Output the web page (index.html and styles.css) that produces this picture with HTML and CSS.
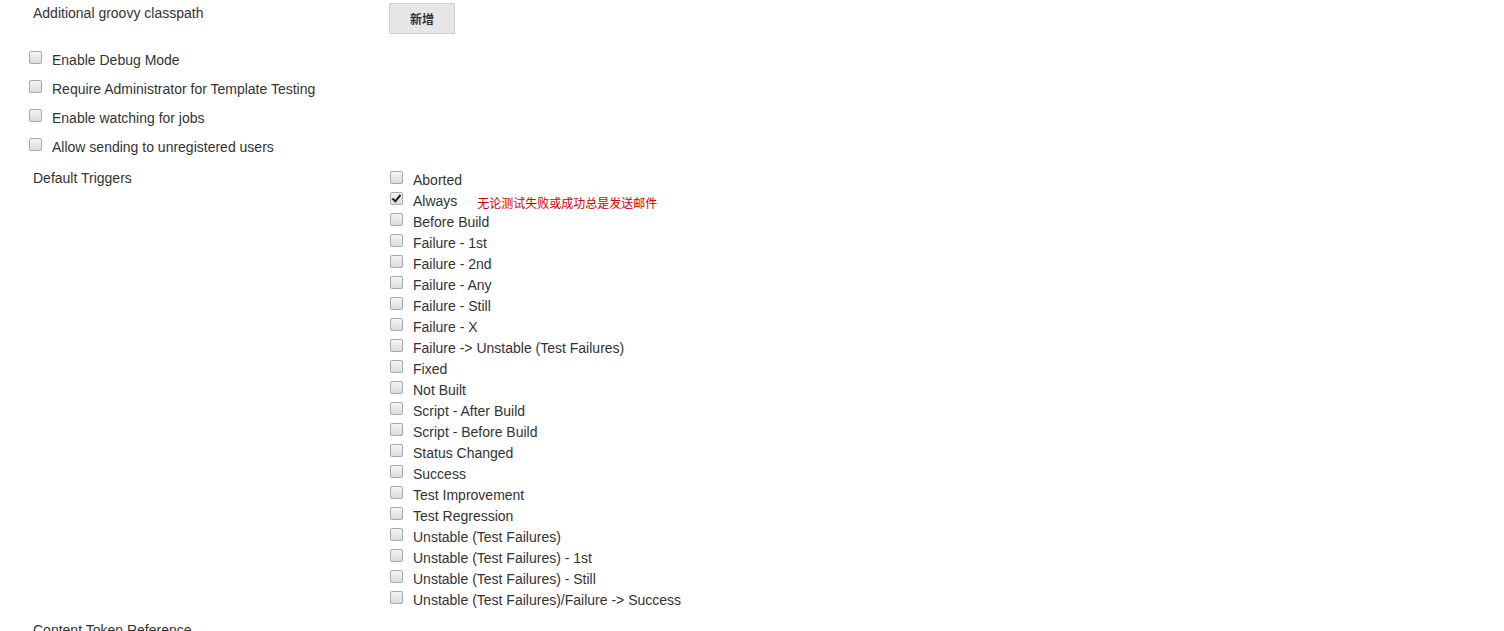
FILE: index.html
```html
<!DOCTYPE html>
<html>
<head>
<meta charset="utf-8">
<link rel="stylesheet" href="styles.css">
</head>
<body>
<div class="page">
  <div class="field field-top">
    <div class="label">Additional groovy classpath</div>
    <div class="value"><button class="btn">新增</button></div>
  </div>

  <div class="opts">
    <label class="opt"><span class="cb"></span><span>Enable Debug Mode</span></label>
    <label class="opt"><span class="cb"></span><span>Require Administrator for Template Testing</span></label>
    <label class="opt"><span class="cb"></span><span>Enable watching for jobs</span></label>
    <label class="opt"><span class="cb"></span><span>Allow sending to unregistered users</span></label>
  </div>

  <div class="field field-triggers">
    <div class="label">Default Triggers</div>
    <div class="value triggers">
      <label class="trig"><span class="cb"></span><span>Aborted</span></label>
      <label class="trig"><span class="cb checked"></span><span>Always</span><span class="note">无论测试失败或成功总是发送邮件</span></label>
      <label class="trig"><span class="cb"></span><span>Before Build</span></label>
      <label class="trig"><span class="cb"></span><span>Failure - 1st</span></label>
      <label class="trig"><span class="cb"></span><span>Failure - 2nd</span></label>
      <label class="trig"><span class="cb"></span><span>Failure - Any</span></label>
      <label class="trig"><span class="cb"></span><span>Failure - Still</span></label>
      <label class="trig"><span class="cb"></span><span>Failure - X</span></label>
      <label class="trig"><span class="cb"></span><span>Failure -&gt; Unstable (Test Failures)</span></label>
      <label class="trig"><span class="cb"></span><span>Fixed</span></label>
      <label class="trig"><span class="cb"></span><span>Not Built</span></label>
      <label class="trig"><span class="cb"></span><span>Script - After Build</span></label>
      <label class="trig"><span class="cb"></span><span>Script - Before Build</span></label>
      <label class="trig"><span class="cb"></span><span>Status Changed</span></label>
      <label class="trig"><span class="cb"></span><span>Success</span></label>
      <label class="trig"><span class="cb"></span><span>Test Improvement</span></label>
      <label class="trig"><span class="cb"></span><span>Test Regression</span></label>
      <label class="trig"><span class="cb"></span><span>Unstable (Test Failures)</span></label>
      <label class="trig"><span class="cb"></span><span>Unstable (Test Failures) - 1st</span></label>
      <label class="trig"><span class="cb"></span><span>Unstable (Test Failures) - Still</span></label>
      <label class="trig"><span class="cb"></span><span>Unstable (Test Failures)/Failure -&gt; Success</span></label>
    </div>
  </div>

  <div class="field field-last">
    <div class="label">Content Token Reference</div>
  </div>
</div>
</body>
</html>
```

FILE: styles.css
```css
html, body {
  margin: 0;
  padding: 0;
  background: #fff;
}
body {
  font-family: "Liberation Sans", Arial, "Noto Sans CJK SC", sans-serif;
  font-size: 14px;
  color: #333;
  overflow: hidden;
  height: 631px;
}
.page {
  display: flex;
  flex-direction: column;
}
.field {
  display: grid;
  grid-template-columns: 389px 1fr;
}
.label {
  padding-left: 33px;
}
.field-top {
  padding-top: 3px;
}
.field-top .label {
  padding-top: 2px;
}
.btn {
  font-family: "Liberation Sans", Arial, "Noto Sans CJK SC", sans-serif;
  font-size: 12px;
  font-weight: bold;
  color: #333;
  width: 66px;
  height: 31px;
  background: #e6e6e6;
  border: 1px solid #cfcfcf;
  border-radius: 0;
  padding: 0;
}
.opts {
  display: flex;
  flex-direction: column;
  padding-top: 11px;
  padding-left: 29px;
}
.opt {
  display: flex;
  align-items: center;
  height: 29px;
}
.cb {
  display: inline-block;
  box-sizing: border-box;
  width: 13px;
  height: 13px;
  border: 1px solid #a9a9a9;
  border-radius: 2px;
  background: linear-gradient(#f4f4f4, #dcdcdc);
  flex: none;
  position: relative;
}
.opt .cb {
  margin-right: 10px;
  margin-top: -4px;
}
.cb.checked::after {
  content: "";
  position: absolute;
  left: 3px;
  top: 0px;
  width: 3px;
  height: 7px;
  border: solid #222;
  border-width: 0 2px 2px 0;
  transform: rotate(40deg);
}
.field-triggers {
  padding-top: 8px;
}
.field-triggers .label {
  padding-top: 1px;
}
.triggers {
  display: flex;
  flex-direction: column;
  padding-left: 0;
}
.trig {
  display: flex;
  align-items: center;
  height: 21px;
}
.trig .cb {
  margin-left: 1px;
  margin-right: 11px;
  margin-top: -4px;
}
.trig > span:nth-child(2) {
  margin-left: -1px;
}
.note {
  color: #cc0000;
  font-size: 12px;
  font-family: "Noto Sans CJK SC", sans-serif;
  margin-left: 20px;
  margin-top: 4px;
}
.field-last {
  padding-top: 12px;
}
```
